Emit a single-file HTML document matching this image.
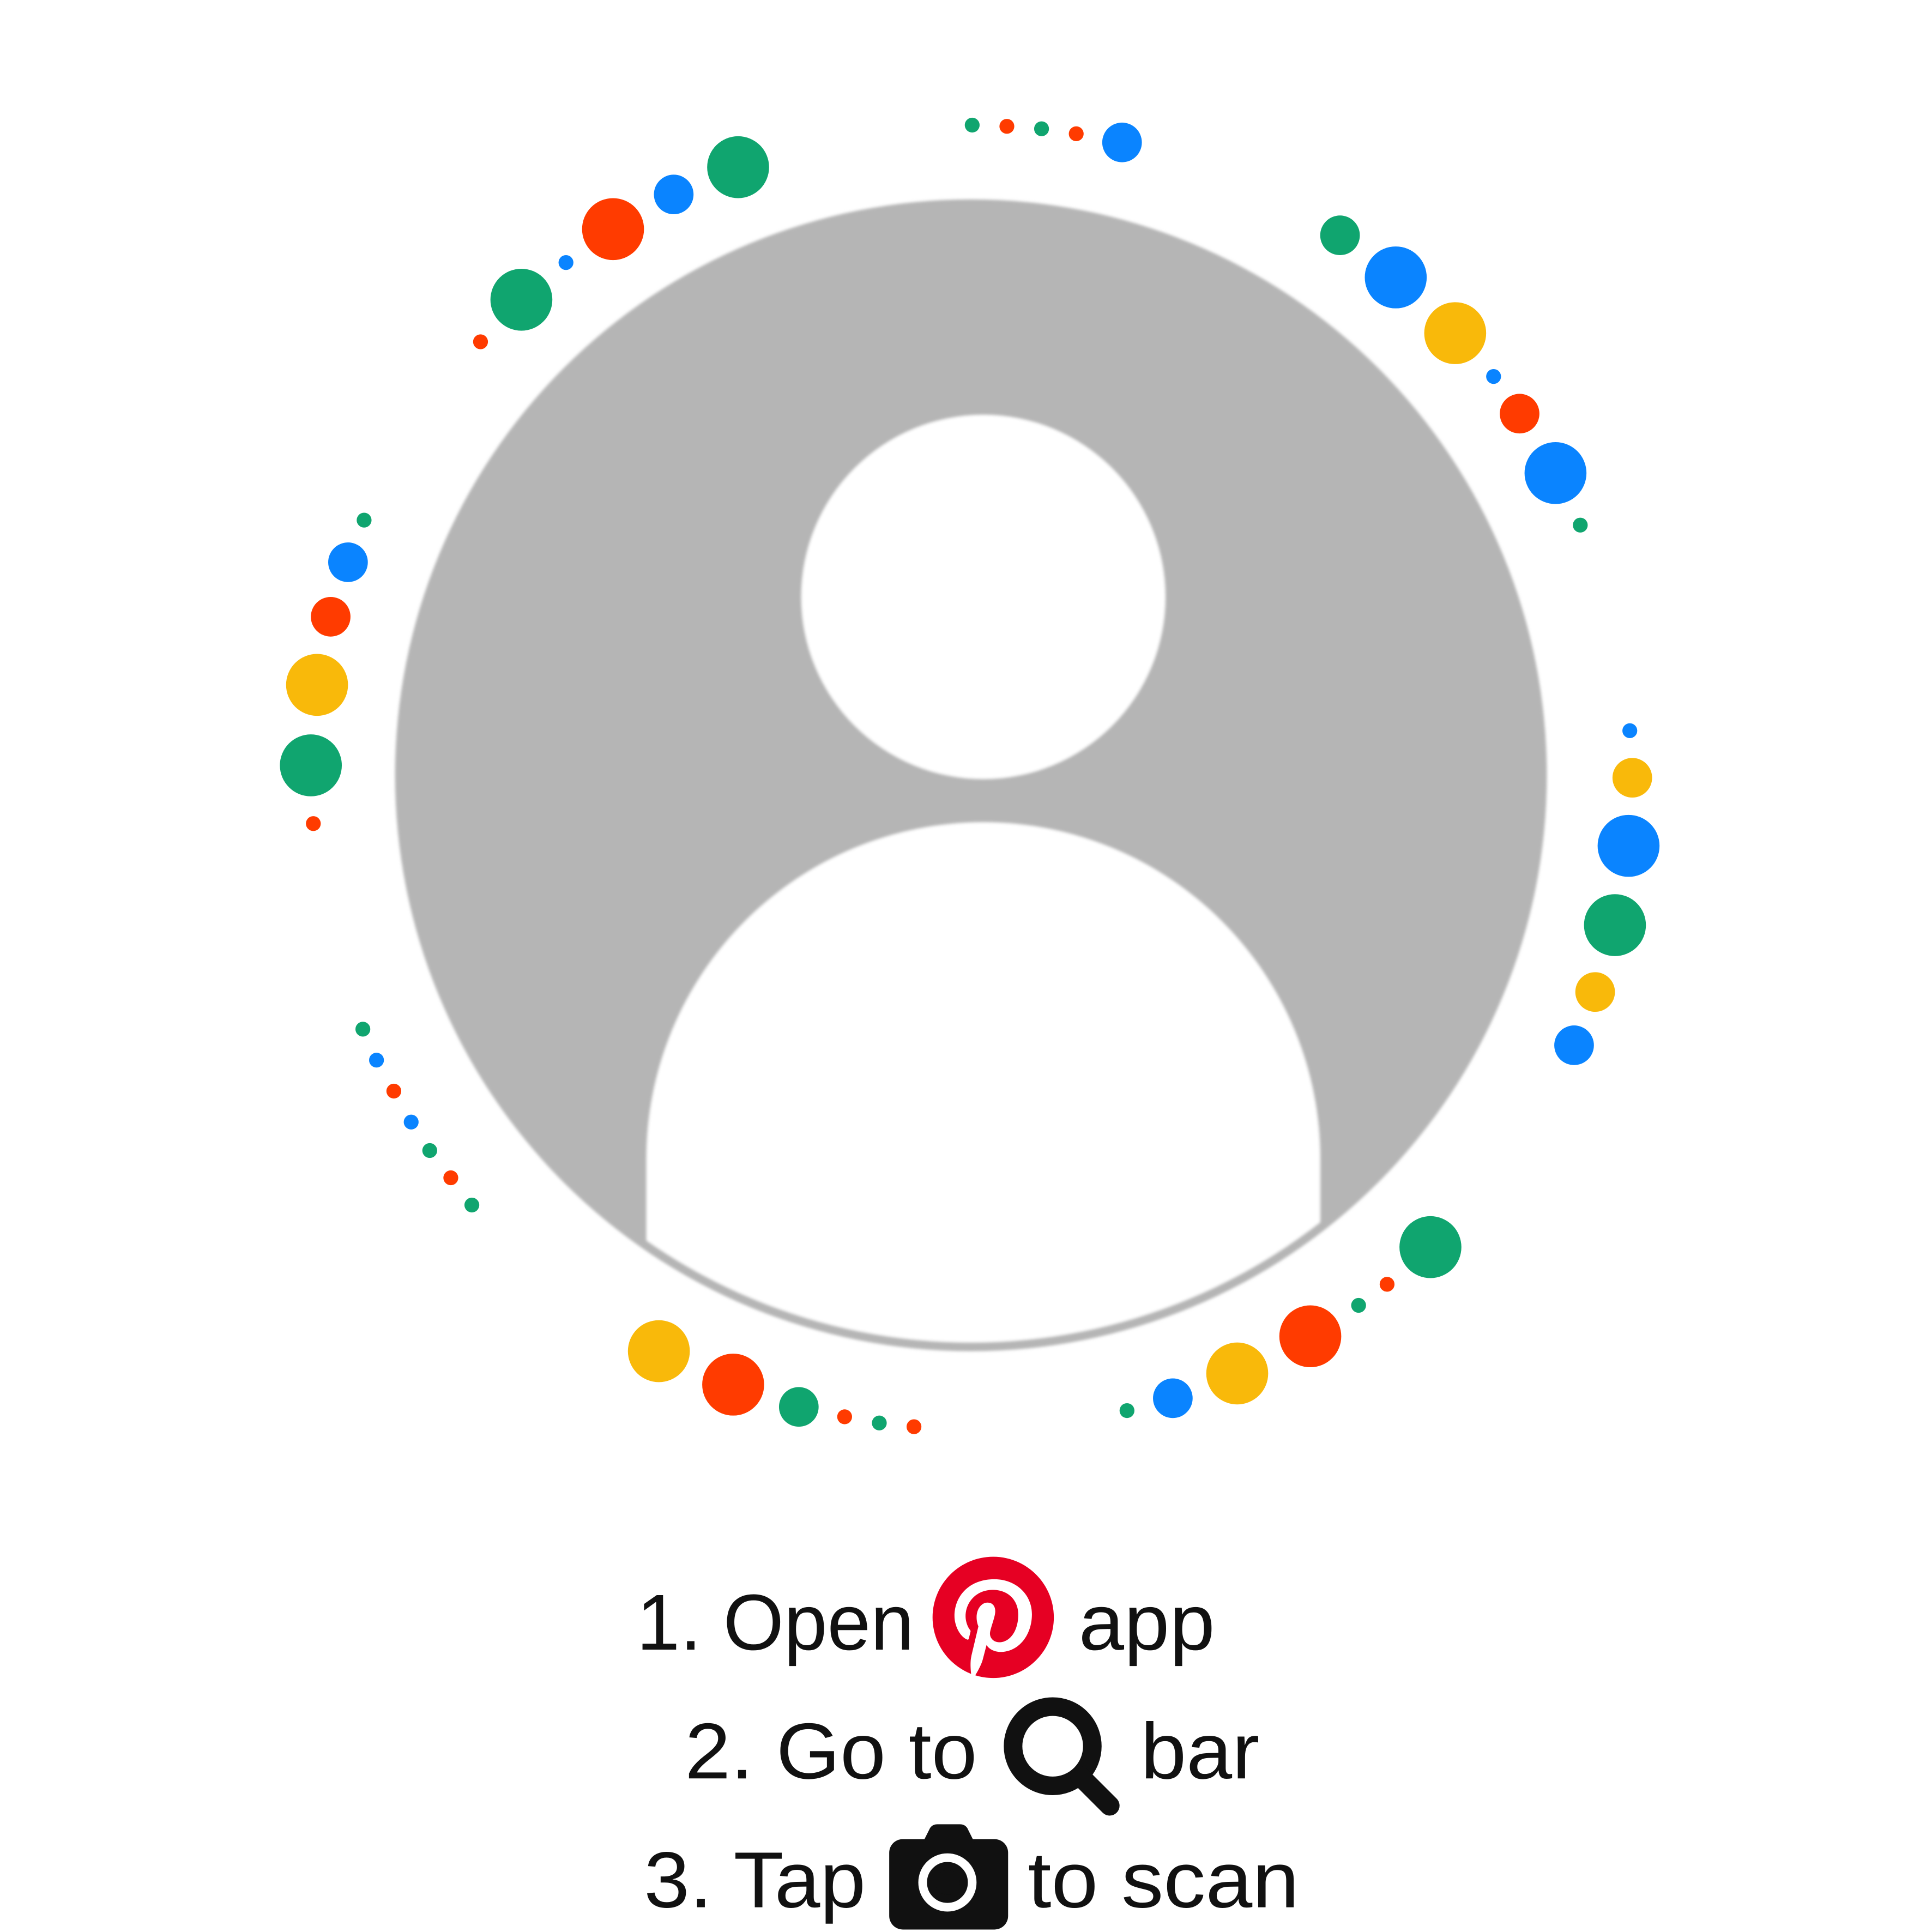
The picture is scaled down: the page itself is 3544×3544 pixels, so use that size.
<!DOCTYPE html>
<html><head><meta charset="utf-8"><style>html,body{margin:0;padding:0;background:#fff}svg{display:block}</style></head>
<body>
<svg width="3544" height="3544" viewBox="0 0 1560 1560" xmlns="http://www.w3.org/2000/svg">
<defs>
<clipPath id="c"><circle cx="784" cy="626" r="458"/></clipPath>
<filter id="b"><feGaussianBlur stdDeviation="1.2"/></filter>
</defs>
<g filter="url(#b)">
<circle cx="784" cy="626" r="465" fill="#b5b5b5"/>
<circle cx="794" cy="482" r="147" fill="#fff"/>
<g clip-path="url(#c)">
<path d="M522 1100 L522 936 A272 272 0 0 1 1066 936 L1066 1100 Z" fill="#fff"/>
</g>
</g>
<g>
<g fill="#10A56F">
<circle cx="785" cy="101" r="6"/><circle cx="841" cy="104" r="6"/>
<circle cx="596" cy="135" r="25"/><circle cx="421" cy="242" r="25"/>
<circle cx="1082" cy="190" r="16"/><circle cx="1276" cy="424" r="6"/>
<circle cx="294" cy="420" r="6"/><circle cx="251" cy="618" r="25"/>
<circle cx="1304" cy="747" r="25"/>
<circle cx="293" cy="831" r="6"/><circle cx="347" cy="929" r="6"/><circle cx="381" cy="973" r="6"/>
<circle cx="645" cy="1136" r="16"/><circle cx="710" cy="1149" r="6"/>
<circle cx="910" cy="1139" r="6"/><circle cx="1097" cy="1054" r="6"/><circle cx="1155" cy="1007" r="25"/>
</g>
<g fill="#FF3B00">
<circle cx="813" cy="102" r="6"/><circle cx="869" cy="108" r="6"/>
<circle cx="495" cy="185" r="25"/><circle cx="388" cy="276" r="6"/>
<circle cx="1227" cy="334" r="16"/>
<circle cx="267" cy="498" r="16"/><circle cx="253" cy="665" r="6"/>
<circle cx="318" cy="881" r="6"/><circle cx="364" cy="951" r="6"/>
<circle cx="592" cy="1118" r="25"/><circle cx="682" cy="1144" r="6"/><circle cx="738" cy="1152" r="6"/>
<circle cx="1058" cy="1079" r="25"/><circle cx="1120" cy="1037" r="6"/>
</g>
<g fill="#0A84FF">
<circle cx="906" cy="115" r="16"/>
<circle cx="544" cy="157" r="16"/><circle cx="457" cy="212" r="6"/>
<circle cx="1127" cy="224" r="25"/><circle cx="1206" cy="304" r="6"/><circle cx="1256" cy="382" r="25"/>
<circle cx="281" cy="454" r="16"/>
<circle cx="1316" cy="590" r="6"/><circle cx="1315" cy="683" r="25"/><circle cx="1271" cy="844" r="16"/>
<circle cx="304" cy="856" r="6"/><circle cx="332" cy="906" r="6"/>
<circle cx="947" cy="1129" r="16"/>
</g>
<g fill="#F9B90A">
<circle cx="1175" cy="269" r="25"/><circle cx="256" cy="553" r="25"/>
<circle cx="1318" cy="628" r="16"/><circle cx="1288" cy="801" r="16"/>
<circle cx="532" cy="1091" r="25"/><circle cx="999" cy="1109" r="25"/>
</g>
</g>
<g font-family="Liberation Sans, sans-serif" font-size="64" fill="#111">
<text x="514" y="1332" textLength="224" lengthAdjust="spacingAndGlyphs">1. Open</text>
<text x="871" y="1332" textLength="110" lengthAdjust="spacingAndGlyphs">app</text>
<text x="553" y="1436" textLength="236" lengthAdjust="spacingAndGlyphs">2. Go to</text>
<text x="921" y="1436" textLength="96" lengthAdjust="spacingAndGlyphs">bar</text>
<text x="520" y="1540" textLength="179" lengthAdjust="spacingAndGlyphs">3. Tap</text>
<text x="830" y="1540" textLength="219" lengthAdjust="spacingAndGlyphs">to scan</text>
</g>
<path transform="translate(753,1257) scale(4.08)" fill="#E60023" d="M12 0C5.373 0 0 5.372 0 12c0 5.084 3.163 9.426 7.627 11.174-.105-.949-.2-2.405.042-3.441.218-.937 1.407-5.965 1.407-5.965s-.359-.719-.359-1.782c0-1.668.967-2.914 2.171-2.914 1.023 0 1.518.769 1.518 1.69 0 1.029-.655 2.568-.994 3.995-.283 1.194.599 2.169 1.777 2.169 2.133 0 3.772-2.249 3.772-5.495 0-2.873-2.064-4.882-5.012-4.882-3.414 0-5.418 2.561-5.418 5.207 0 1.031.397 2.138.893 2.738a.36.36 0 01.083.345l-.333 1.36c-.053.22-.174.267-.402.161-1.499-.698-2.436-2.889-2.436-4.649 0-3.785 2.750-7.262 7.929-7.262 4.163 0 7.398 2.967 7.398 6.931 0 4.136-2.607 7.464-6.227 7.464-1.216 0-2.359-.631-2.750-1.378l-.748 2.853c-.271 1.043-1.002 2.350-1.492 3.146C9.570 23.812 10.763 24 12 24c6.627 0 12-5.373 12-12 0-6.628-5.373-12-12-12z"/>
<circle cx="850" cy="1410" r="32" fill="none" stroke="#111" stroke-width="15"/>
<line x1="872" y1="1434" x2="896" y2="1458" stroke="#111" stroke-width="16" stroke-linecap="round"/>
<g fill="#111">
<rect x="718" y="1485" width="96" height="73" rx="11"/>
<path d="M745 1488 L751 1476 Q753 1473 757 1473 L775 1473 Q779 1473 781 1476 L787 1488 Z"/>
</g>
<circle cx="765" cy="1520" r="20" fill="none" stroke="#fff" stroke-width="7"/>
<circle cx="765" cy="1520" r="10" fill="#111"/>
</svg>
</body></html>
